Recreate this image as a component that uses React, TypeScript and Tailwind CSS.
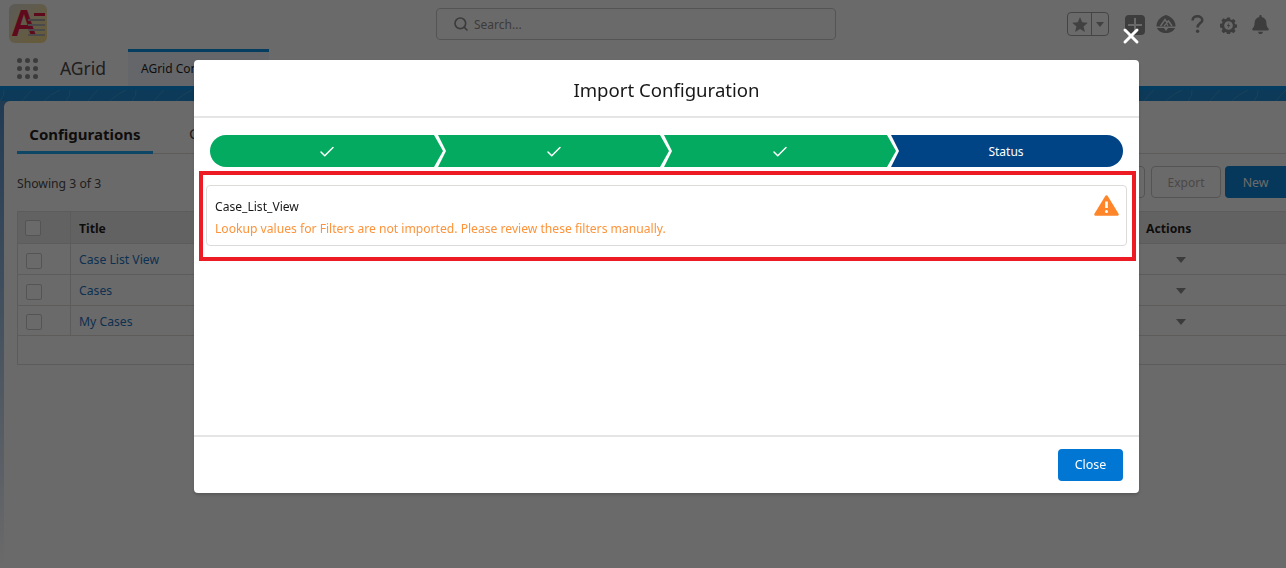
import React from "react";
import { Search, Check, X } from "lucide-react";
import { FaBell } from "react-icons/fa";

const font = "font-['Noto_Sans','Liberation_Sans',sans-serif]";

function Logo() {
  return (
    <div className="ml-[9px] mt-[4px] w-[38px] h-[39px] rounded-[6px] bg-gradient-to-br from-[#d8d8d0] to-[#f6da7e] flex pl-[2px] pt-[2px]">
      <span className="text-[36px] leading-[36px] font-bold text-[#e0103c] font-['Liberation_Sans',sans-serif]">A</span>
      <div className="-ml-[9px] mt-[7px] w-[17px] flex flex-col gap-[3px]">
        <div className="h-[3px] bg-[#e0103c] ml-[6px]" />
        <div className="h-[2px] bg-[#a0a0a0]" />
        <div className="h-[2px] bg-[#b0b0b0]" />
        <div className="h-[2px] bg-[#b0b0b0]" />
        <div className="h-[2px] bg-[#b0b0b0]" />
      </div>
    </div>
  );
}

function GridDots() {
  return (
    <div className="ml-[17px] w-[21px] grid grid-cols-3 gap-[3px]">
      {Array.from({ length: 9 }).map((_, i) => (
        <div key={i} className="w-[5px] h-[5px] rounded-full bg-[#8a8a8a]" />
      ))}
    </div>
  );
}

function Box() {
  return <div className="w-[16px] h-[16px] rounded-[2px] border border-[#c9c9c9] bg-white" />;
}

function Header() {
  return (
    <div className="h-[50px] bg-white flex items-start relative">
      <Logo />
      <div className="absolute left-[436px] top-[8px] w-[400px] h-[32px] rounded-[4px] border border-[#c9c9c9] bg-white flex items-center pl-[16px] gap-[5px]">
        <Search size={16} strokeWidth={2.5} className="text-[#8a8a8a]" />
        <span className="text-[12px] mt-[1px] text-[#8a8a8a]">Search...</span>
      </div>
      <div className="ml-auto mr-[16px] mt-[12px] flex items-start">
        <div className="w-[42px] h-[24px] rounded-[4px] border border-[#a0a0a0] flex">
          <div className="w-[24px] flex items-center justify-center border-r border-[#a0a0a0]">
            <svg width="16" height="15" viewBox="0 0 16 15"><path d="M8 0l2.2 5.2 5.6.5-4.2 3.7 1.3 5.5L8 12l-4.9 2.9 1.3-5.5L.2 5.7l5.6-.5z" fill="#9a9a9a" /></svg>
          </div>
          <div className="flex-1 flex items-center justify-center">
            <div className="w-0 h-0 border-l-[4px] border-r-[4px] border-t-[5px] border-l-transparent border-r-transparent border-t-[#9a9a9a]" />
          </div>
        </div>
        <div className="ml-[16px] mt-[3px] w-[20px] h-[20px] rounded-[4px] bg-[#8e8e8e] flex items-center justify-center">
          <svg width="14" height="14" viewBox="0 0 14 14"><path d="M7 0v14M0 7h14" stroke="#fff" strokeWidth="2" /></svg>
        </div>
        <svg className="ml-[11px] mt-[3px]" width="20" height="18" viewBox="0 0 20 18">
          <path d="M10 0 C14 1 19 4.5 19.5 10.5 L19.5 11.5 L0.5 11.5 L0.5 10.5 C1 4.5 6 1 10 0Z" fill="#8e8e8e" />
          <path d="M1 13 L8 13 L10 16 L12 13 L19 13 C18 16 14 18 10 18 C6 18 2 16 1 13Z" fill="#8e8e8e" />
          <path d="M4.5 11 L9 4.5 L11 7.5 L12.5 6 L16 11" stroke="#fff" strokeWidth="1.5" fill="none" />
          <path d="M8 11 L10.5 8.5 L12 11" stroke="#fff" strokeWidth="1.1" fill="none" />
        </svg>
        <svg className="ml-[15px] mt-[3px]" width="13" height="18" viewBox="0 0 13 18" fill="none">
          <path d="M1.6 5.4 C1.6 2.8 3.8 1.3 6.4 1.3 C9.2 1.3 11.3 3 11.3 5.2 C11.3 8 6.6 8.4 6.6 12.4" stroke="#8e8e8e" strokeWidth="2.6" />
          <circle cx="6.6" cy="16.2" r="1.7" fill="#8e8e8e" />
        </svg>
        <svg className="ml-[16px] mt-[5px]" width="17" height="17" viewBox="0 0 18 18">
          <path d="M7.4 0.5h3.2l.4 2.2 1.4.6 1.9-1.2 2.2 2.2-1.2 1.9.6 1.4 2.2.4v3.2l-2.2.4-.6 1.4 1.2 1.9-2.2 2.2-1.9-1.2-1.4.6-.4 2.2H7.4l-.4-2.2-1.4-.6-1.9 1.2-2.2-2.2 1.2-1.9-.6-1.4-2.2-.4V7.2l2.2-.4.6-1.4L1.5 3.5l2.2-2.2 1.9 1.2L7 1.9z" fill="#8e8e8e" />
          <circle cx="9" cy="9" r="4.6" fill="#fff" />
          <path d="M10 5.5 L7.2 9.6 H9 L8 12.5 L10.9 8.4 H9.1Z" fill="#8e8e8e" />
        </svg>
        <FaBell size={19} className="ml-[14px] mt-[3px] text-[#8e8e8e]" />
      </div>
    </div>
  );
}

function Nav() {
  return (
    <div className="h-[36px] bg-white flex items-center relative">
      <GridDots />
      <span className="ml-[22px] w-[68px] text-[17.5px] text-[#444]">AGrid</span>
      <div className="-mt-[1px] h-[37px] w-[141px] bg-[#eef6ff] border-t-[3px] border-[#0090e8] flex items-center pl-[13px] text-[12px] text-[#181818]">
        AGrid Configurations
      </div>
    </div>
  );
}

function Band() {
  return (
    <div className="h-[15px] bg-[#1487d2] border-t-[4px] border-[#0090e8] overflow-hidden">
      <svg width="1286" height="11" viewBox="0 0 1286 11" fill="none" stroke="#4fa6de" strokeWidth="0.6">
        {Array.from({ length: 60 }).map((_, i) => (
          <path key={i} d={`M${i * 22} 11 Q${i * 22 + 5} 5 ${i * 22 + (i % 3) * 6 + 4} 0`} />
        ))}
      </svg>
    </div>
  );
}

const rows = ["Case List View", "Cases", "My Cases"];

function Table() {
  return (
    <div className="ml-[13px] border border-[#dddbda] border-r-0">
      <div className="h-[32px] bg-[#ececec] flex items-center border-b border-[#dddbda] relative">
        <div className="w-[53px] h-full flex items-center pl-[7px] pt-[1px] border-r border-[#dddbda]"><Box /></div>
        <span className="ml-[8px] mt-[3px] text-[12.2px] font-bold text-[#181818]">Title</span>
        <span className="absolute left-[1128px] top-[8px] text-[12.2px] font-bold text-[#181818]">Actions</span>
      </div>
      {rows.map((r, i) => (
        <div key={r} className={`${i === 2 ? "h-[30px]" : "h-[31px]"} flex items-center border-b border-[#dddbda] relative`}>
          <div className="w-[53px] h-full flex items-center pl-[8px] pt-[3px] border-r border-[#dddbda]"><Box /></div>
          <span className={`ml-[8px] ${i === 2 ? "mt-[3px]" : "mt-[2px]"} text-[12.2px] text-[#1070c0]`}>{r}</span>
          <div className="absolute left-[1158px] w-0 h-0 border-l-[5px] border-r-[5px] border-t-[6px] border-l-transparent border-r-transparent border-t-[#8a8a8a] mt-[2px]" />
        </div>
      ))}
      <div className="h-[28px]" />
    </div>
  );
}

function Card() {
  return (
    <div className="ml-[4px] h-[467px] bg-white rounded-tl-[6px]">
      <div className="h-[53px] ml-[13px] flex items-end border-b border-[#dddbda]">
        <div className="w-[136px] h-[53px] border-b-[3px] -mb-[1px] border-[#18a8f5] text-center pt-[23px] text-[15px] font-bold leading-[20px] text-[#181818]">
          Configurations
        </div>
        <div className="ml-[36px] h-[53px] pt-[23px] text-[15px] leading-[20px] text-[#444]">Columns</div>
      </div>
      <div className="h-[57px] pt-[12px] pb-[13px] flex items-center pl-[13px]">
        <span className="mt-[5px] text-[12.2px] text-[#444]">Showing 3 of 3</span>
        <div className="ml-auto flex h-[32px]">
          <div className="w-[70px] rounded-[4px] border border-[#c9c9c9]" />
          <div className="ml-[6px] w-[70px] pt-[2px] rounded-[4px] border border-[#c9c9c9] flex items-center justify-center text-[12px] text-[#aaa]">Export</div>
          <div className="ml-[4px] w-[61px] pt-[2px] rounded-l-[4px] bg-[#0082d8] flex items-center justify-center text-[12.3px] text-white">New</div>
        </div>
      </div>
      <Table />
    </div>
  );
}

function Step({ first, last, active, width, label }: { first?: boolean; last?: boolean; active?: boolean; width: string; label?: string }) {
  return (
    <div
      className={`${width} h-[32px] flex items-center justify-center pt-[2px] text-white text-[12px] ${
        active ? "bg-[#014486] pr-[2px]" : "bg-[#04aa5f]"
      } ${first ? "rounded-l-full [clip-path:polygon(0_0,calc(100%-9px)_0,100%_50%,calc(100%-9px)_100%,0_100%)]" : ""} ${
        last
          ? "rounded-r-full -ml-[5px] [clip-path:polygon(0_0,100%_0,100%_100%,0_100%,8px_50%)]"
          : ""
      } ${
        !first && !last
          ? "-ml-[5px] [clip-path:polygon(0_0,calc(100%-9px)_0,100%_50%,calc(100%-9px)_100%,0_100%,8px_50%)]"
          : ""
      }`}
    >
      {label ? label : <Check size={18} strokeWidth={2} />}
    </div>
  );
}

function Modal() {
  return (
    <div className="fixed inset-0 bg-[rgba(8,7,7,0.6)]">
      <div className="relative ml-[194px] mt-[60px] w-[945px] h-[433px] bg-white rounded-[4px] shadow-[0_2px_3px_rgba(0,0,0,0.16)] flex flex-col">
        <X size={24} strokeWidth={3} className="absolute left-[925px] -top-[36px] text-white" />
        <div className="h-[58px] shrink-0 pt-[3px] border-b-[2px] border-[#e5e5e5] flex items-center justify-center text-[18.6px] text-[#181818]">
          Import Configuration
        </div>
        <div className="flex-1 flex flex-col">
          <div className="ml-[16px] mt-[17px] flex">
            <Step first width="w-[233px]" />
            <Step width="w-[231px]" />
            <Step width="w-[232px]" />
            <Step last active width="w-[232px]" label="Status" />
          </div>
          <div className="ml-[5px] mt-[4px] w-[937px] h-[90px] border-[4px] border-[#ed1c24] flex">
            <div className="relative ml-[3px] mt-[10px] w-[921px] h-[61px] rounded-[4px] border border-[#dddbda] pl-[8px] pt-[12px]">
              <div className="text-[12.1px] leading-[18px] text-[#181818]">Case_List_View</div>
              <div className="mt-[4px] text-[12.13px] leading-[18px] text-[#fe9339]">
                Lookup values for Filters are not imported. Please review these filters manually.
              </div>
              <svg className="absolute right-[7px] top-[9px]" width="25" height="21" viewBox="0 0 25 21">
                <path d="M12.5 1.5 L23.5 19.5 H1.5Z" fill="#fe8529" stroke="#fe8529" strokeWidth="2.5" strokeLinejoin="round" />
                <path d="M12.5 6.5 V13" stroke="#fff" strokeWidth="2.6" />
                <circle cx="12.5" cy="16.4" r="1.5" fill="#fff" />
              </svg>
            </div>
          </div>
        </div>
        <div className="h-[58px] shrink-0 border-t-[2px] border-[#e5e5e5] flex items-center justify-end pr-[16px]">
          <div className="w-[65px] h-[32px] rounded-[4px] bg-[#0176d3] text-white text-[12.5px] flex items-center justify-center">Close</div>
        </div>
      </div>
    </div>
  );
}

export default function App() {
  return (
    <div className={`${font} w-[1286px] h-[568px] overflow-hidden bg-gradient-to-b from-[#0b6fb8] to-[#ffffff]`}>
      <Header />
      <Nav />
      <Band />
      <Card />
      <Modal />
    </div>
  );
}
